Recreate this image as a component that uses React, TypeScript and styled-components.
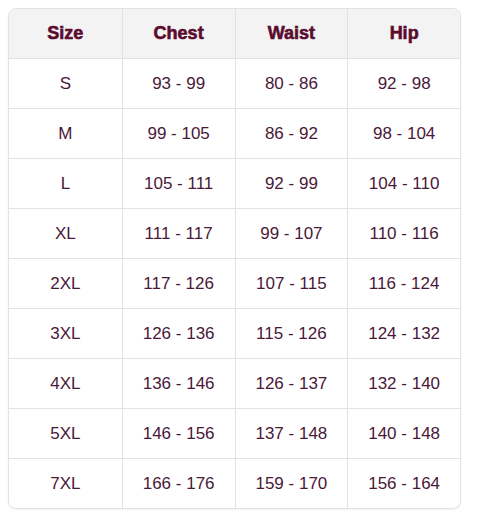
import styled, { createGlobalStyle } from "styled-components";

const GlobalStyle = createGlobalStyle`
  html, body {
    margin: 0;
    padding: 0;
    background: #ffffff;
  }
  body {
    font-family: "Liberation Sans", Arial, sans-serif;
  }
`;

const Wrapper = styled.div`
  padding: 8px 19px 14px 8px;
`;

const Table = styled.table`
  width: 453px;
  border-collapse: separate;
  border-spacing: 0;
  border: 1px solid #e2e2e2;
  border-radius: 8px;
  overflow: hidden;
  box-shadow: 0 1px 2px rgba(0, 0, 0, 0.06);
  table-layout: fixed;
`;

const HeadCell = styled.th<{ $first?: boolean }>`
  height: 49px;
  padding: 0;
  background: #f3f3f3;
  color: #5a0c2f;
  font-size: 18px;
  font-weight: 700;
  text-align: center;
  border-bottom: 1px solid #e2e2e2;
  border-left: ${(p) => (p.$first ? "none" : "1px solid #e2e2e2")};
  -webkit-text-stroke: 0.6px #5a0c2f;
`;

const Cell = styled.td<{ $first?: boolean; $last?: boolean }>`
  height: 49px;
  padding: 0;
  color: #4a1838;
  font-size: 17px;
  text-align: center;
  border-bottom: ${(p) => (p.$last ? "none" : "1px solid #e2e2e2")};
  border-left: ${(p) => (p.$first ? "none" : "1px solid #e2e2e2")};
`;

const headers = ["Size", "Chest", "Waist", "Hip"];

const rows = [
  ["S", "93 - 99", "80 - 86", "92 - 98"],
  ["M", "99 - 105", "86 - 92", "98 - 104"],
  ["L", "105 - 111", "92 - 99", "104 - 110"],
  ["XL", "111 - 117", "99 - 107", "110 - 116"],
  ["2XL", "117 - 126", "107 - 115", "116 - 124"],
  ["3XL", "126 - 136", "115 - 126", "124 - 132"],
  ["4XL", "136 - 146", "126 - 137", "132 - 140"],
  ["5XL", "146 - 156", "137 - 148", "140 - 148"],
  ["7XL", "166 - 176", "159 - 170", "156 - 164"],
];

export default function App() {
  return (
    <>
      <GlobalStyle />
      <Wrapper>
        <Table>
          <thead>
            <tr>
              {headers.map((h, i) => (
                <HeadCell key={h} $first={i === 0}>
                  {h}
                </HeadCell>
              ))}
            </tr>
          </thead>
          <tbody>
            {rows.map((r, ri) => (
              <tr key={r[0]}>
                {r.map((v, ci) => (
                  <Cell key={ci} $first={ci === 0} $last={ri === rows.length - 1}>
                    {v}
                  </Cell>
                ))}
              </tr>
            ))}
          </tbody>
        </Table>
      </Wrapper>
    </>
  );
}
